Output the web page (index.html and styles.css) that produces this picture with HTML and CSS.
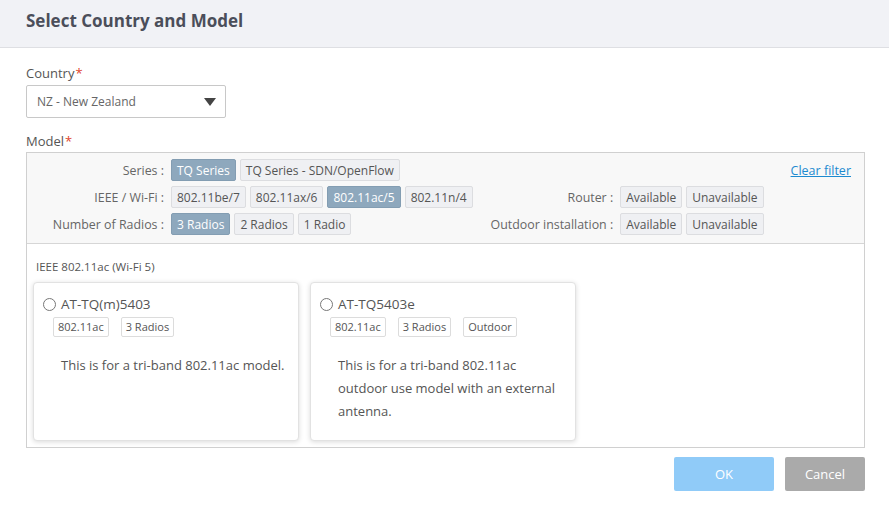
FILE: index.html
```html
<!DOCTYPE html>
<html lang="en">
<head>
    <meta charset="UTF-8">
    <meta name="viewport" content="width=device-width, initial-scale=1.0">
    <title>Select Country and Model</title>
    <link rel="stylesheet" href="styles.css">
</head>
<body>
    <div class="dialog-header">
        <h1>Select Country and Model</h1>
    </div>

    <div class="dialog-body">
        <div class="field-label">Country<span class="req">*</span></div>
        <div class="select-box">
            <span>NZ - New Zealand</span>
            <span class="caret"></span>
        </div>

        <div class="field-label model-label">Model<span class="req">*</span></div>
        <div class="model-panel">
            <div class="filters">
                <div class="f-label">Series :</div>
                <div class="f-buttons">
                    <button class="chip active">TQ Series</button>
                    <button class="chip">TQ Series - SDN/OpenFlow</button>
                </div>
                <div></div>
                <div></div>
                <a class="clear-link" href="#">Clear filter</a>

                <div class="f-label">IEEE / Wi-Fi :</div>
                <div class="f-buttons">
                    <button class="chip">802.11be/7</button>
                    <button class="chip">802.11ax/6</button>
                    <button class="chip active">802.11ac/5</button>
                    <button class="chip">802.11n/4</button>
                </div>
                <div class="f-label">Router :</div>
                <div class="f-buttons">
                    <button class="chip">Available</button>
                    <button class="chip">Unavailable</button>
                </div>
                <div></div>

                <div class="f-label">Number of Radios :</div>
                <div class="f-buttons">
                    <button class="chip active">3 Radios</button>
                    <button class="chip">2 Radios</button>
                    <button class="chip">1 Radio</button>
                </div>
                <div class="f-label">Outdoor installation :</div>
                <div class="f-buttons">
                    <button class="chip">Available</button>
                    <button class="chip">Unavailable</button>
                </div>
                <div></div>
            </div>

            <div class="results">
                <div class="group-title">IEEE 802.11ac (Wi-Fi 5)</div>
                <div class="cards">
                    <div class="card">
                        <label class="card-title"><span class="radio"></span>AT-TQ(m)5403</label>
                        <div class="tags">
                            <span class="tag">802.11ac</span>
                            <span class="tag">3 Radios</span>
                        </div>
                        <p class="desc">This is for a tri-band 802.11ac model.</p>
                    </div>
                    <div class="card">
                        <label class="card-title"><span class="radio"></span>AT-TQ5403e</label>
                        <div class="tags">
                            <span class="tag">802.11ac</span>
                            <span class="tag">3 Radios</span>
                            <span class="tag">Outdoor</span>
                        </div>
                        <p class="desc">This is for a tri-band 802.11ac outdoor use model with an external antenna.</p>
                    </div>
                </div>
            </div>
        </div>

        <div class="actions">
            <button class="btn btn-ok">OK</button>
            <button class="btn btn-cancel">Cancel</button>
        </div>
    </div>
</body>
</html>
```

FILE: styles.css
```css
body {
    margin: 0;
    width: 889px;
    font-family: 'Open Sans', 'Noto Sans', sans-serif;
    color: #555;
    background: #fff;
}
.dialog-header {
    height: 48px;
    background: #f1f2f6;
    border-bottom: 1px solid #dedfe3;
    box-sizing: border-box;
    padding: 0 26px;
    display: flex;
    align-items: center;
}
.dialog-header h1 {
    margin: 0;
    font-size: 17px;
    font-weight: 700;
    color: #4b4e5a;
    margin-top: -6px;
}
.dialog-body {
    padding: 17px 24px 0 26px;
}
.field-label {
    font-size: 13px;
    color: #555;
    line-height: 16px;
}
.req {
    color: #e0452b;
    margin-left: 1px;
}
.select-box {
    margin-top: 4px;
    width: 200px;
    height: 33px;
    box-sizing: border-box;
    border: 1px solid #c8c8c8;
    border-radius: 2px;
    display: flex;
    align-items: center;
    justify-content: space-between;
    padding: 0 8px 0 10px;
    font-size: 12px;
    color: #666;
}
.caret {
    width: 0;
    height: 0;
    border-left: 6px solid transparent;
    border-right: 6px solid transparent;
    border-top: 8px solid #444;
    margin-right: 1px;
}
.model-label {
    margin-top: 15px;
}
.model-panel {
    margin-top: 3px;
    border: 1px solid #d0d0d0;
}
.filters {
    background: #f8f8f8;
    border-bottom: 1px solid #d6d6d6;
    padding: 6px 13px 8px 0;
    display: grid;
    grid-template-columns: 137px 1fr auto auto auto;
    grid-auto-rows: 22px;
    column-gap: 7px;
    row-gap: 5px;
    align-items: center;
}
.f-label {
    text-align: right;
    font-size: 12.4px;
    color: #666;
    white-space: nowrap;
}
.f-buttons {
    display: flex;
    gap: 4px;
}
.chip {
    height: 22px;
    padding: 0 5px;
    border: 1px solid #dcdde0;
    border-radius: 2px;
    background: #eff0f3;
    font-family: inherit;
    font-size: 12px;
    color: #555;
    cursor: pointer;
    white-space: nowrap;
}
.chip.active {
    background: #8ea8bd;
    border-color: #839db2;
    color: #fff;
}
.clear-link {
    margin-left: 20px;
    font-size: 12.5px;
    color: #1d8ad0;
}
.results {
    padding: 15px 7px 6px 6px;
}
.group-title {
    font-size: 11.5px;
    line-height: 16px;
    color: #555;
    padding-left: 3px;
}
.cards {
    display: flex;
    gap: 11px;
    margin-top: 7px;
}
.card {
    width: 266px;
    height: 159px;
    box-sizing: border-box;
    border: 1px solid #e2e2e2;
    border-radius: 4px;
    box-shadow: 0 1px 5px rgba(0, 0, 0, 0.15);
    padding: 12px 10px 0 9px;
    background: #fff;
}
.card-title {
    display: flex;
    align-items: center;
    font-size: 13.5px;
    color: #555;
}
.radio {
    width: 11px;
    height: 11px;
    border: 1px solid #777;
    border-radius: 50%;
    margin-right: 5px;
}
.tags {
    display: flex;
    gap: 12px;
    margin: 4px 0 0 10px;
}
.tag {
    height: 20px;
    box-sizing: border-box;
    border: 1px solid #dcdcdc;
    border-radius: 2px;
    padding: 0 4px;
    font-size: 11px;
    line-height: 18px;
    color: #555;
}
.desc {
    margin: 17px 0 0 18px;
    font-size: 13px;
    line-height: 23px;
    color: #555;
}
.actions {
    display: flex;
    justify-content: flex-end;
    gap: 11px;
    margin-top: 9px;
}
.btn {
    height: 34px;
    border: none;
    border-radius: 2px;
    font-family: inherit;
    font-size: 13px;
    color: #fff;
}
.btn-ok {
    width: 100px;
    background: #90cbf8;
}
.btn-cancel {
    width: 80px;
    background: #aaaaaa;
}
```
